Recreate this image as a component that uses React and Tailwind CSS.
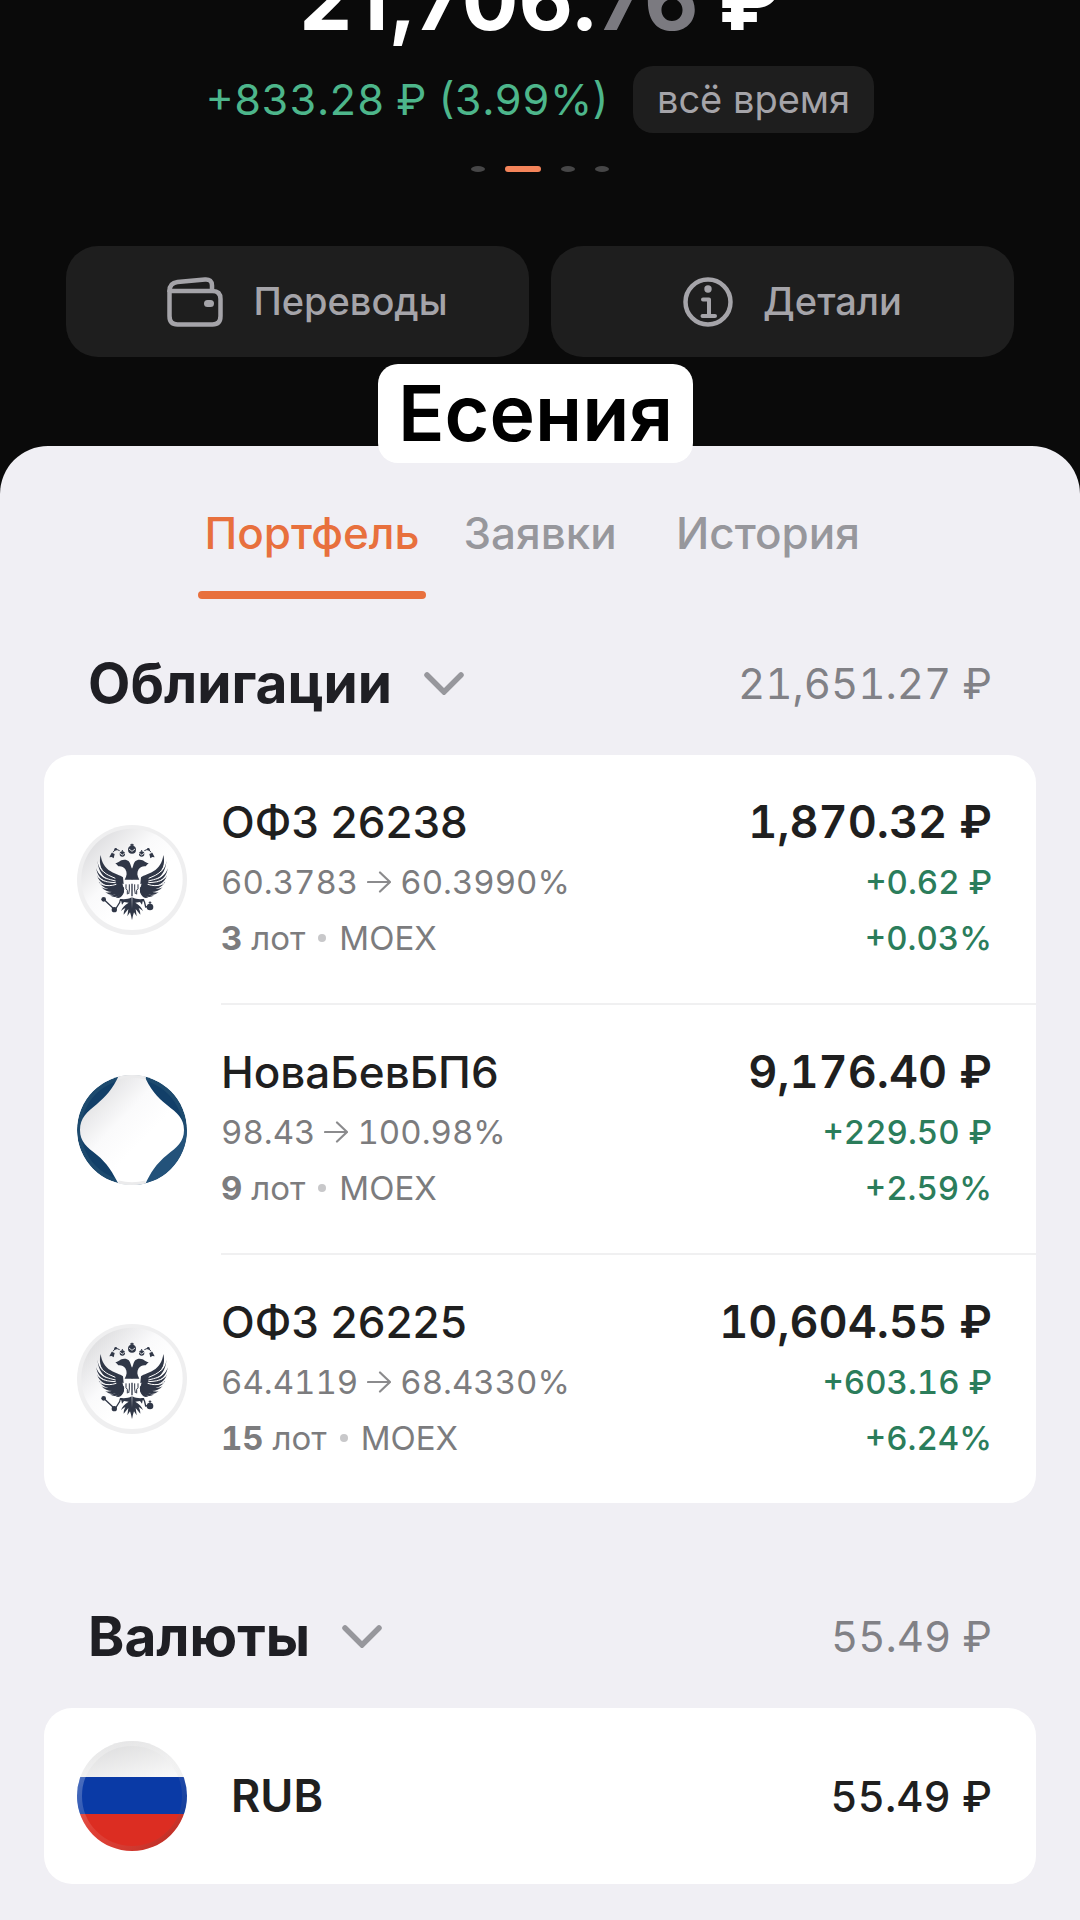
import React, { useState } from 'react';
import clsx from 'clsx';

const bonds = [
    { id: 'ofz26238', name: 'ОФЗ 26238', from: '60.3783', to: '60.3990%', lots: 3, total: '1,870.32 ₽', gain: '+0.62 ₽', pct: '+0.03%', logo: 'eagle' },
    { id: 'nova', name: 'НоваБевБП6', from: '98.43', to: '100.98%', lots: 9, total: '9,176.40 ₽', gain: '+229.50 ₽', pct: '+2.59%', logo: 'nova' },
    { id: 'ofz26225', name: 'ОФЗ 26225', from: '64.4119', to: '68.4330%', lots: 15, total: '10,604.55 ₽', gain: '+603.16 ₽', pct: '+6.24%', logo: 'eagle' },
];

const tabs = ['Портфель', 'Заявки', 'История'];

const WalletIcon = () => (
    <svg viewBox="0 0 56 50" className="w-14 h-[50px]" fill="none" stroke="currentColor" strokeWidth="4.5" strokeLinejoin="round" aria-hidden="true">
        <path d="M2.5 14v25q0 8.500 8 8.500h35q8 0 8-8.500V22q0-8-8-8z" />
        <path d="M2.5 15v-1q0-8 8-9L38 2.500q7-.5 7 6v5.500" />
        <rect x="37" y="23" width="10" height="7" rx="3.5" fill="currentColor" stroke="none" />
    </svg>
);

const InfoIcon = () => (
    <svg viewBox="0 0 50 50" className="w-[50px] h-[50px]" fill="none" stroke="currentColor" strokeWidth="4.5" aria-hidden="true">
        <circle cx="25" cy="25" r="22.5" />
        <circle cx="25" cy="12" r="3.7" fill="currentColor" stroke="none" />
        <path d="M20 22.5h6V39M19.5 39h12.5" strokeWidth="4" strokeLinecap="round" strokeLinejoin="round" />
    </svg>
);

const Chevron = () => (
    <svg viewBox="0 0 40 24" className="w-10 h-6" fill="none" stroke="#97979c" strokeWidth="5.5" strokeLinecap="round" aria-hidden="true">
        <path d="M3 4l17 17L37 4" />
    </svg>
);

const Arrow = () => (
    <svg viewBox="0 0 24 24" className="w-6 h-6" fill="none" stroke="#8b8b8d" strokeWidth="2.2" strokeLinecap="round" strokeLinejoin="round" aria-label="→">
        <path d="M1 12h22M13 2.500l10 9.500-10 9.500" />
    </svg>
);

// left half of the eagle, drawn twice
const EagleHalf = () => (
    <g>
        <path d="M188 191h-23c7-12 8-21 2-31-5-8-13-10-21-9l-9-10c11 0 13-10 27-10 12 0 17 7 19 17l5 11z" />
        <path d="M93 117c3 22 12 38 30 49 12 8 29 12 37 18l2 20c-22-1-47-13-60-32-10-16-14-36-9-55z" />
        <path d="M84 134c2 23 15 38 36 47l38 15-1 9c-29 1-72-22-73-71z" />
        <path d="M80 157c5 19 20 30 41 36l37 8v8c-31 4-74-13-78-52z" />
        <path d="M82 178c8 14 22 21 42 24l35 3v7c-27 9-68-2-77-34z" />
        <path d="M87 197c10 10 23 13 39 12l33-1 1 5c-23 14-59 9-73-16z" />
        <path d="M95 213c11 7 22 7 36 4l28-8 2 6c-18 17-49 19-66-2z" />
        <path d="M107 228c12 4 21 0 31-5l22-12 3 6c-14 20-39 27-56 11z" />
        <path d="M121 238c10 1 18-4 25-11l15-14 3 7c-9 19-27 30-43 18z" />
        <path d="M137 243c8-1 13-7 17-14l9-14v14c-5 13-14 22-26 14z" />
        <path d="M87 140c5 18 14 30 30 38l20 9M84 160c7 17 19 26 38 31l16 4M84 181c11 11 24 17 40 18l14 1M90 202c13 7 25 8 38 6l12-3" fill="none" stroke="#fff" strokeWidth="3" />
        <path d="M186 244c-10 6-22 6-35 5l-3 9 7-2 2 10 6-8 14 2c-11 7-20 15-23 26 5-5 9-8 13-9-4 7-5 13-5 19l14-17-3 22 8-12 7 23z" />
        <circle cx="158" cy="114" r="8" />
        <path d="M151 112l7 5 7-5" fill="none" stroke="#fff" strokeWidth="2.5" />
        <path d="M158 102v5M150 104l-12-5-8 10" fill="none" stroke="#303747" strokeWidth="3" />
        <circle cx="138" cy="100" r="4" />
        <path d="M126 110l9 4-3 13-6-4-7 1z" />
        <path d="M169 205v13l4 5v12M179 205v17l-2 12" fill="none" stroke="#303747" strokeWidth="3" />
    </g>
);

const CoinShade = ({ id }) => (
    <defs>
        <linearGradient id={id} x1="0.1" y1="0.1" x2="0.6" y2="0.6">
            <stop offset="0" stopColor="#dcdcde" />
            <stop offset="0.6" stopColor="#fafafb" />
            <stop offset="1" stopColor="#ffffff" />
        </linearGradient>
    </defs>
);

const EagleLogo = ({ id }) => (
    <svg viewBox="22 27 330 330" className="w-[110px] h-[110px] shrink-0" fill="#303747" aria-hidden="true">
        <CoinShade id={id} />
        <circle cx="187" cy="192" r="165" fill="#efeff0" />
        <circle cx="187" cy="190" r="152" fill={`url(#${id})`} />
        <EagleHalf />
        <g transform="translate(374 0) scale(-1 1)">
            <EagleHalf />
        </g>
        <circle cx="187" cy="101" r="12" />
        <path d="M187 83v10M182 87h10" stroke="#303747" strokeWidth="4" />
        <path d="M178 99l9 7 9-7" fill="none" stroke="#fff" strokeWidth="2.5" />
        <path d="M181 131l6 28 6-28-6-6z" fill="#fff" />
        <path d="M187 203v38" stroke="#303747" strokeWidth="4" />
        <path d="M102 250l34 32 15-24M224 256l4 17 13-2" fill="none" stroke="#303747" strokeWidth="4" />
        <circle cx="102" cy="250" r="7" />
        <circle cx="134" cy="281" r="8" />
        <circle cx="241" cy="273" r="10" />
        <path d="M241 256v8M237 260h8" stroke="#303747" strokeWidth="3" />
    </svg>
);

const NovaLogo = ({ id }) => (
    <svg viewBox="0 0 110 110" className="w-[110px] h-[110px] shrink-0" aria-hidden="true">
        <CoinShade id={id} />
        <clipPath id={`${id}-clip`}>
            <circle cx="55" cy="55" r="55" />
        </clipPath>
        <g clipPath={`url(#${id}-clip)`}>
            <circle cx="55" cy="55" r="55" fill="#1d4a6e" />
            <circle cx="55" cy="55" r="51" fill="#123f68" />
            <path d="M55 55h55v55H55z" fill="#23527a" />
            <path d="M42 0C36 14 28 22 20 29 10 37 3 43 3 55s7 17 17 25c10 8 16 18 22 30h26c5-12 12-22 22-30 10-8 17-13 17-25s-7-17-17-25C80 22 73 14 67 0z" fill={`url(#${id})`} />
            <path d="M41 2a55 55 0 0 1 28 0M41 108a55 55 0 0 0 28 0" fill="none" stroke="#ebebec" strokeWidth="5" />
        </g>
    </svg>
);

const FlagLogo = () => (
    <svg viewBox="0 0 110 110" className="w-[110px] h-[110px] shrink-0" aria-hidden="true">
        <defs>
            <clipPath id="flag-clip">
                <circle cx="55" cy="55" r="55" />
            </clipPath>
            <linearGradient id="flag-white" x1="0" y1="0" x2="0.8" y2="1">
                <stop offset="0" stopColor="#d8d8d9" />
                <stop offset="1" stopColor="#f8f8f8" />
            </linearGradient>
            <linearGradient id="flag-rim" x1="0" y1="0" x2="1" y2="1">
                <stop offset="0" stopColor="#ffffff" stopOpacity="0.35" />
                <stop offset="0.5" stopColor="#ffffff" stopOpacity="0.08" />
                <stop offset="1" stopColor="#000000" stopOpacity="0.2" />
            </linearGradient>
        </defs>
        <g clipPath="url(#flag-clip)">
            <path d="M0 0h110v36H0z" fill="url(#flag-white)" />
            <path d="M0 36h110v37H0z" fill="#0a3aa6" />
            <path d="M0 73h110v37H0z" fill="#dc2d22" />
            <circle cx="55" cy="55" r="52.5" fill="none" stroke="url(#flag-rim)" strokeWidth="5" />
        </g>
    </svg>
);

const SectionHeader = ({ title, amount }) => (
    <div className="flex items-center justify-between h-[68px] mb-[38px] px-11">
        <h2>
            <button className="flex items-center gap-8 text-[55px] leading-[68px] font-bold text-[#1f1f24]">
                {title}
                <Chevron />
            </button>
        </h2>
        <span className="text-[42px] text-[#818186] tabular-nums">{amount}</span>
    </div>
);

const BondRow = ({ bond, last }) => (
    <li className="flex items-center gap-[34px] pl-[33px]">
        {bond.logo === 'eagle' ? <EagleLogo id={bond.id} /> : <NovaLogo id={bond.id} />}
        <div className={clsx('flex-1 flex justify-between pt-[35px] pb-[37px] pr-11', !last && 'border-b-2 border-[#f0f0f1]')}>
            <div className="text-[33px] leading-[56px] text-[#7c7c7e] tabular-nums">
                <div className="text-[44px] leading-[64px] font-medium text-[#1f1f1f] proportional-nums">{bond.name}</div>
                <div className="flex items-center gap-[9px]">
                    {bond.from}
                    <Arrow />
                    {bond.to}
                </div>
                <div className="flex items-center gap-[13px]">
                    <span><b className="font-bold">{bond.lots}</b> лот</span>
                    <span className="w-2 h-2 rounded-full bg-[#c8c8ca]"></span>
                    <span>MOEX</span>
                </div>
            </div>
            <div className="text-right text-[33px] leading-[56px] font-medium text-[#2b7d5b] tabular-nums">
                <div className="text-[45px] leading-[64px] font-semibold text-[#1f1f1f]">{bond.total}</div>
                <div>{bond.gain}</div>
                <div>{bond.pct}</div>
            </div>
        </div>
    </li>
);

const App = () => {
    const [activeTab, setActiveTab] = useState('Портфель');

    return (
        <div className="min-h-screen flex flex-col overflow-hidden bg-[#0a0a0a] font-['Inter',sans-serif]">
            <header className="flex flex-col items-center px-[66px] pb-[89px]">
                <h1 className="-mt-10 text-[84px] leading-[80px] font-bold text-white">
                    21,706.<span className="text-[#7b7a80]">76</span> ₽
                </h1>
                <div className="flex items-center gap-6 mt-[26px]">
                    <span className="text-[43px] text-[#4db68b] tabular-nums">+833.28 ₽ (3.99%)</span>
                    <button className="h-[67px] px-6 rounded-[20px] bg-[#1e1e1e] text-[38px] text-[#a5a4a9]">всё время</button>
                </div>
                <div className="flex gap-5 mt-[33px]">
                    <span className="w-[14px] h-[6px] rounded-[50%] bg-[#464647]"></span>
                    <span className="w-9 h-[6px] rounded-full bg-[#f4845a]"></span>
                    <span className="w-[14px] h-[6px] rounded-[50%] bg-[#464647]"></span>
                    <span className="w-[14px] h-[6px] rounded-[50%] bg-[#464647]"></span>
                </div>
                <div className="grid grid-cols-2 gap-[22px] w-full mt-[74px] text-[38px] font-medium text-[#a5a4a9]">
                    <button className="flex items-center justify-center gap-[30px] h-[111px] pl-5 rounded-[32px] bg-[#1e1e1e]">
                        <WalletIcon />
                        Переводы
                    </button>
                    <button className="flex items-center justify-center gap-[30px] h-[111px] pl-5 rounded-[32px] bg-[#1e1e1e]">
                        <InfoIcon />
                        Детали
                    </button>
                </div>
            </header>

            <main className="relative flex-1 px-11 pt-[60px] pb-9 rounded-t-[48px] bg-[#f0eff4]">
                <div className="absolute -top-[82px] left-[35%] px-5 rounded-[20px] bg-white text-[77px] leading-[99px] font-semibold text-black">
                    Есения
                </div>

                <nav className="flex justify-center text-[44px] leading-[54px] font-medium">
                    {tabs.map(tab => (
                        <button
                            key={tab}
                            onClick={() => setActiveTab(tab)}
                            className={clsx('w-[228px] flex flex-col items-center', activeTab === tab ? 'text-[#e8703d]' : 'text-[#97979c]')}
                        >
                            {tab}
                            <span className={clsx('w-full h-2 mt-[31px] rounded-full', activeTab === tab && 'bg-[#e8703d]')}></span>
                        </button>
                    ))}
                </nav>

                <section className="mt-[50px]">
                    <SectionHeader title="Облигации" amount="21,651.27 ₽" />
                    <ul className="rounded-[28px] bg-white">
                        {bonds.map((bond, i) => (
                            <BondRow key={bond.id} bond={bond} last={i === bonds.length - 1} />
                        ))}
                    </ul>
                </section>

                <section className="mt-[99px]">
                    <SectionHeader title="Валюты" amount="55.49 ₽" />
                    <div className="flex items-center h-44 pl-[33px] pr-11 rounded-[28px] bg-white text-[#1f1f1f]">
                        <FlagLogo />
                        <span className="flex-1 pl-11 text-[45px] font-semibold">RUB</span>
                        <span className="text-[42px] font-medium tabular-nums">55.49 ₽</span>
                    </div>
                </section>
            </main>
        </div>
    );
};

export default App;
